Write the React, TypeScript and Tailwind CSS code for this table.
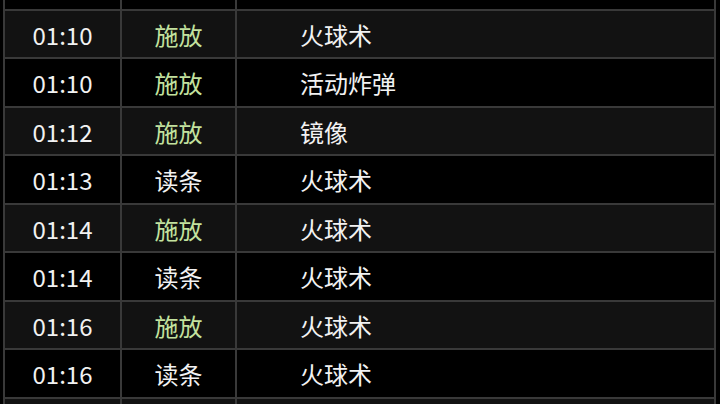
import React from 'react';

type Row = { time: string; kind: '施放' | '读条'; skill: string };

const rows: Row[] = [
  { time: '01:10', kind: '施放', skill: '火球术' },
  { time: '01:10', kind: '施放', skill: '活动炸弹' },
  { time: '01:12', kind: '施放', skill: '镜像' },
  { time: '01:13', kind: '读条', skill: '火球术' },
  { time: '01:14', kind: '施放', skill: '火球术' },
  { time: '01:14', kind: '读条', skill: '火球术' },
  { time: '01:16', kind: '施放', skill: '火球术' },
  { time: '01:16', kind: '读条', skill: '火球术' },
];

const LogRow: React.FC<{ row?: Row; striped: boolean }> = ({ row, striped }) => (
  <div
    className={`flex h-[48.5px] border-b-2 border-[#393939] ${striped ? 'bg-[#121212]' : 'bg-black'}`}
  >
    <div className="w-[117px] shrink-0 border-r-2 border-[#393939] flex items-center justify-center pt-[2px]">
      {row?.time}
    </div>
    <div
      className={`w-[115px] shrink-0 border-r-2 border-[#393939] flex items-center justify-center pt-[2px] ${
        row?.kind === '施放' ? 'text-[#c3e29f]' : ''
      }`}
    >
      {row?.kind}
    </div>
    <div className="flex-1 flex items-center pl-[63px] pt-[2px]">{row?.skill}</div>
  </div>
);

export default function App() {
  return (
    <div
      className="w-[720px] h-[404px] overflow-hidden bg-black text-[#f2f2f2] text-[24px] leading-none"
      style={{ fontFamily: '"Noto Sans CJK SC", "Noto Sans", sans-serif' }}
    >
      {/* list is scrolled: the row above is mostly out of view */}
      <div className="ml-[3px] w-[713px] -mt-[38px] border-l-2 border-r-2 border-[#393939]">
        <LogRow striped={false} />
        {rows.map((r, i) => (
          <LogRow key={i} row={r} striped={i % 2 === 0} />
        ))}
        <LogRow striped />
      </div>
    </div>
  );
}
